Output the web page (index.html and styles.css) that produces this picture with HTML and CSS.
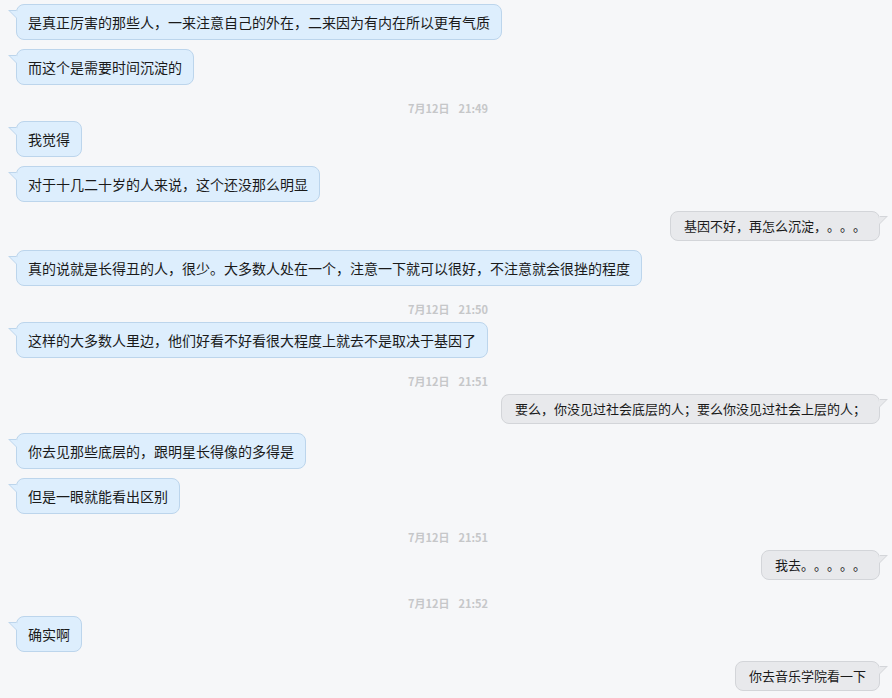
FILE: index.html
```html
<!DOCTYPE html>
<html lang="zh-CN">
<head>
<meta charset="utf-8">
<title>聊天记录</title>
<link rel="stylesheet" href="styles.css">
</head>
<body>
<div class="chat">
  <div class="msg left"><div class="bubble">是真正厉害的那些人，一来注意自己的外在，二来因为有内在所以更有气质</div></div>
  <div class="msg left"><div class="bubble">而这个是需要时间沉淀的</div></div>
  <div class="time">7月12日  21:49</div>
  <div class="msg left"><div class="bubble">我觉得</div></div>
  <div class="msg left"><div class="bubble">对于十几二十岁的人来说，这个还没那么明显</div></div>
  <div class="msg right"><div class="bubble">基因不好，再怎么沉淀，。。。</div></div>
  <div class="msg left"><div class="bubble">真的说就是长得丑的人，很少。大多数人处在一个，注意一下就可以很好，不注意就会很挫的程度</div></div>
  <div class="time">7月12日  21:50</div>
  <div class="msg left"><div class="bubble">这样的大多数人里边，他们好看不好看很大程度上就去不是取决于基因了</div></div>
  <div class="time">7月12日  21:51</div>
  <div class="msg right"><div class="bubble">要么，你没见过社会底层的人；要么你没见过社会上层的人；</div></div>
  <div class="msg left"><div class="bubble">你去见那些底层的，跟明星长得像的多得是</div></div>
  <div class="msg left"><div class="bubble">但是一眼就能看出区别</div></div>
  <div class="time">7月12日  21:51</div>
  <div class="msg right"><div class="bubble">我去。。。。。</div></div>
  <div class="time">7月12日  21:52</div>
  <div class="msg left"><div class="bubble">确实啊</div></div>
  <div class="msg right"><div class="bubble">你去音乐学院看一下</div></div>
</div>
</body>
</html>
```

FILE: styles.css
```css
html, body {
  margin: 0;
  padding: 0;
  background: #f6f7f9;
}

body {
  font-family: "Noto Sans CJK SC", "Noto Sans", sans-serif;
  color: #1a1a1a;
  text-spacing-trim: space-all;
}

.chat {
  display: flex;
  flex-direction: column;
  padding: 4px 12px 0 16px;
}

.msg {
  display: flex;
  margin-bottom: 9px;
}

.msg.left {
  justify-content: flex-start;
}

.msg.right {
  justify-content: flex-end;
}

.bubble {
  position: relative;
  border-radius: 8px;
  border: 1px solid;
  white-space: nowrap;
}

.left .bubble {
  background: #ddeefd;
  border-color: #bcd5ec;
  font-size: 14px;
  line-height: 20px;
  padding: 7px 11px;
}

.right .bubble {
  background: #e8e9ec;
  border-color: #d3d5d9;
  font-size: 13px;
  line-height: 18px;
  padding: 5px 13px;
}

.bubble::before,
.bubble::after {
  content: "";
  position: absolute;
  width: 0;
  height: 0;
}

.left .bubble::before {
  left: -9px;
  top: 5px;
  border-top: 8px solid #bcd5ec;
  border-left: 8px solid transparent;
}

.left .bubble::after {
  left: -7px;
  top: 6px;
  border-top: 7px solid #ddeefd;
  border-left: 7px solid transparent;
}

.right .bubble::before {
  right: -9px;
  top: 4px;
  border-top: 8px solid #d3d5d9;
  border-right: 8px solid transparent;
}

.right .bubble::after {
  right: -7px;
  top: 5px;
  border-top: 7px solid #e8e9ec;
  border-right: 7px solid transparent;
}

.time {
  text-align: center;
  white-space: pre;
  font-size: 11px;
  font-weight: bold;
  line-height: 18px;
  word-spacing: 2px;
  color: #c6c7c9;
  padding: 5px 0 4px;
  margin-left: 0;
}
```
